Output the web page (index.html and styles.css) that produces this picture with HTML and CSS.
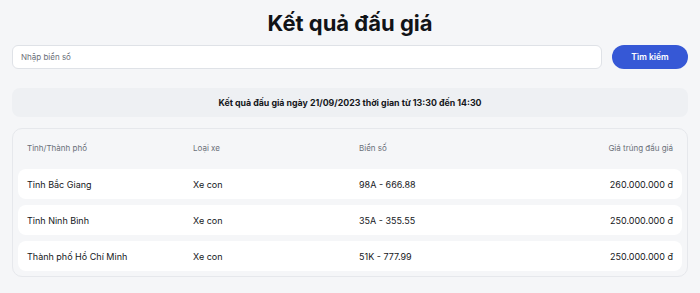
FILE: index.html
```html
<!DOCTYPE html>
<html lang="vi">
<head>
<meta charset="utf-8">
<title>Kết quả đấu giá</title>
<link rel="stylesheet" href="styles.css">
</head>
<body>
<main class="page">
  <h1 class="title">Kết quả đấu giá</h1>
  <form class="search">
    <input class="search-input" type="text" placeholder="Nhập biển số">
    <button class="search-btn" type="button">Tìm kiếm</button>
  </form>
  <div class="info">Kết quả đấu giá ngày 21/09/2023 thời gian từ 13:30 đến 14:30</div>
  <section class="card">
    <div class="row head">
      <div class="cell">Tỉnh/Thành phố</div>
      <div class="cell">Loại xe</div>
      <div class="cell">Biển số</div>
      <div class="cell right">Giá trúng đấu giá</div>
    </div>
    <div class="row item">
      <div class="cell">Tỉnh Bắc Giang</div>
      <div class="cell">Xe con</div>
      <div class="cell">98A - 666.88</div>
      <div class="cell right">260.000.000 đ</div>
    </div>
    <div class="row item">
      <div class="cell">Tỉnh Ninh Bình</div>
      <div class="cell">Xe con</div>
      <div class="cell">35A - 355.55</div>
      <div class="cell right">250.000.000 đ</div>
    </div>
    <div class="row item">
      <div class="cell">Thành phố Hồ Chí Minh</div>
      <div class="cell">Xe con</div>
      <div class="cell">51K - 777.99</div>
      <div class="cell right">250.000.000 đ</div>
    </div>
  </section>
</main>
</body>
</html>
```
FILE: styles.css
```css
* { box-sizing: border-box; }
body {
  margin: 0;
  background: #f5f6f8;
  font-family: Inter, "Noto Sans", sans-serif;
  color: #1f2329;
}
.page {
  padding: 8px 12px;
}
.title {
  margin: 0;
  text-align: center;
  font-size: 22px;
  line-height: 30px;
  font-weight: 700;
  color: #111317;
}
.search {
  display: flex;
  gap: 10px;
  margin: 7px 0 0;
}
.search-input {
  flex: 1;
  height: 24px;
  border: 1px solid #dfe2e7;
  border-radius: 6px;
  background: #fff;
  padding: 0 8px;
  font-family: inherit;
  font-size: 8px;
  color: #333;
  outline: none;
}
.search-input::placeholder { color: #6b7079; }
.search-btn {
  width: 76px;
  height: 24px;
  border: 0;
  border-radius: 12px;
  background: #3658d6;
  color: #fff;
  font-family: inherit;
  font-size: 8.5px;
  font-weight: 600;
  padding: 0;
}
.info {
  margin-top: 19px;
  height: 29px;
  border-radius: 8px;
  background: #eef0f3;
  display: flex;
  align-items: center;
  justify-content: center;
  font-size: 8.8px;
  font-weight: 700;
  color: #15171b;
}
.card {
  margin-top: 11px;
  border: 1px solid #e6e8ec;
  border-radius: 10px;
  padding: 0 5px 5px;
  display: flex;
  flex-direction: column;
  gap: 6px;
}
.row {
  display: grid;
  grid-template-columns: repeat(4, 1fr);
  align-items: center;
}
.cell {
  padding: 0 9px;
  white-space: nowrap;
}
.head {
  height: 34px;
  padding-top: 4px;
  font-size: 8px;
  color: #6b7079;
}
.item {
  height: 30px;
  background: #fff;
  border-radius: 8px;
  font-size: 9px;
  font-weight: 400;
  color: #15171b;
}
.right { text-align: right; }
```
